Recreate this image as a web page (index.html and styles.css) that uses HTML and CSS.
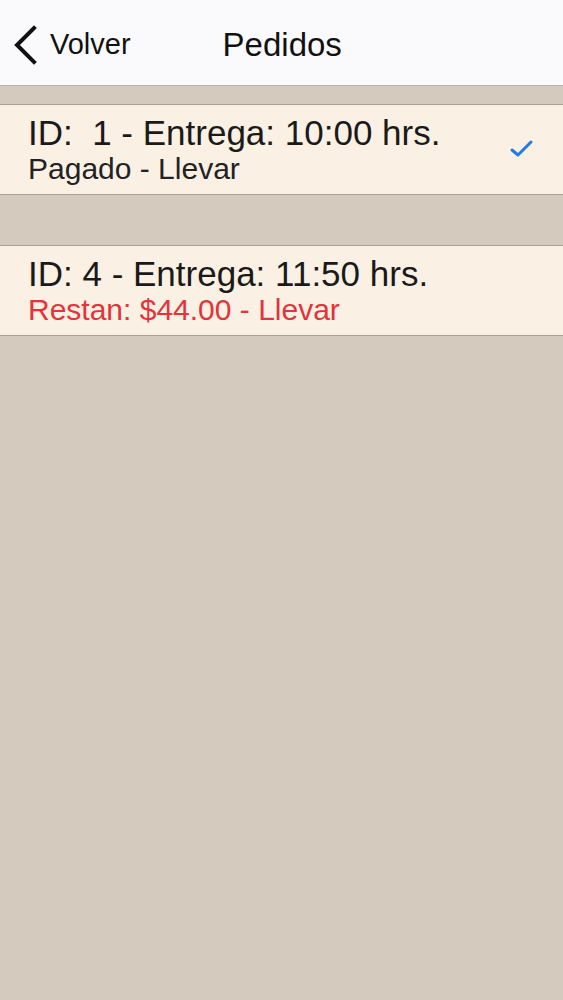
FILE: index.html
```html
<!DOCTYPE html>
<html lang="es">
<head>
  <meta charset="UTF-8">
  <title>Pedidos</title>
  <link rel="stylesheet" href="styles.css">
</head>
<body>

  <header class="navbar">
    <a class="back" href="#">
      <svg class="back-icon" width="26" height="40" viewBox="0 0 26 40">
        <path d="M22 3 L5 20 L22 37" fill="none" stroke="#111" stroke-width="4" stroke-linecap="square"/>
      </svg>
      <span>Volver</span>
    </a>
    <h1 class="title">Pedidos</h1>
  </header>

  <div class="list">
    <div class="order">
      <div class="order-text">
        <div class="order-title">ID:&nbsp; 1 - Entrega: 10:00 hrs.</div>
        <div class="order-sub">Pagado - Llevar</div>
      </div>
      <svg class="check" width="26" height="22" viewBox="0 0 26 22">
        <path d="M3 12 L9 17 L22 4" fill="none" stroke="#1f7ee6" stroke-width="3" stroke-linecap="round" stroke-linejoin="round"/>
      </svg>
    </div>

    <div class="order">
      <div class="order-text">
        <div class="order-title">ID: 4 - Entrega: 11:50 hrs.</div>
        <div class="order-sub pending">Restan: $44.00 - Llevar</div>
      </div>
    </div>
  </div>

</body>
</html>
```

FILE: styles.css
```css
* {
  box-sizing: border-box;
}

body {
  margin: 0;
  min-height: 100vh;
  background-color: #d4cabd;
  font-family: 'Liberation Sans', Arial, sans-serif;
  color: #1a1a1a;
}

.navbar {
  height: 86px;
  background-color: #fafafc;
  border-bottom: 1px solid #b9b2a8;
  display: flex;
  align-items: center;
  padding: 4px 12px 0;
}

.back {
  display: flex;
  align-items: center;
  gap: 12px;
  color: #111;
  text-decoration: none;
  font-size: 29px;
}

.title {
  margin: 0 0 0 92px;
  font-size: 33px;
  font-weight: 400;
  color: #111;
}

.list {
  padding-top: 18px;
  display: flex;
  flex-direction: column;
  gap: 50px;
}

.order {
  background-color: #faf1e4;
  border-top: 1px solid #a9a298;
  border-bottom: 1px solid #a9a298;
  height: 91px;
  display: flex;
  align-items: center;
  justify-content: space-between;
  padding: 0 28px 0 28px;
}

.order-title {
  font-size: 35px;
  line-height: 38px;
}

.order-sub {
  font-size: 30px;
  line-height: 34px;
  color: #222;
}

.order-sub.pending {
  color: #e3333b;
}

.check {
  margin-top: -2px;
}
```
